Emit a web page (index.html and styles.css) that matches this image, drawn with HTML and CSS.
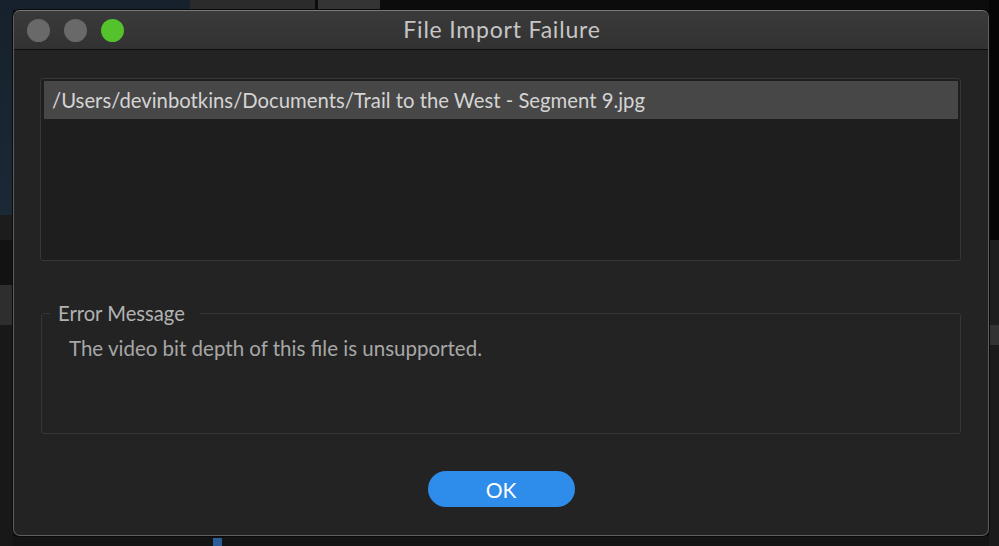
FILE: index.html
```html
<!DOCTYPE html>
<html>
<head>
<meta charset="utf-8">
<link rel="stylesheet" href="styles.css">
</head>
<body>
<div class="desktop">
  <div class="dialog">
    <div class="titlebar">
      <div class="lights">
        <span class="light"></span>
        <span class="light"></span>
        <span class="light green"></span>
      </div>
      <div class="title">File Import Failure</div>
    </div>
    <div class="content">
      <div class="filelist">
        <div class="row selected">/Users/devinbotkins/Documents/Trail to the West - Segment 9.jpg</div>
      </div>
      <fieldset class="group">
        <legend>Error Message</legend>
        <p class="message">The video bit depth of this file is unsupported.</p>
      </fieldset>
      <div class="actions">
        <button class="ok">OK</button>
      </div>
    </div>
  </div>
</div>
</body>
</html>
```
FILE: styles.css
```css
* { box-sizing: border-box; }
html, body { margin: 0; padding: 0; }
body {
  width: 999px;
  height: 546px;
  overflow: hidden;
  background: #0c0c0c;
  font-family: Lato, "Open Sans", sans-serif;
}
.desktop {
  width: 999px;
  height: 546px;
  padding: 10px 10px 10px 13px;
  background:
    linear-gradient(#16212d, #16212d) 0 0 / 190px 10px no-repeat,
    linear-gradient(#2b2b2b, #2b2b2b) 190px 0 / 125px 10px no-repeat,
    linear-gradient(#343434, #343434) 318px 0 / 62px 10px no-repeat,
    linear-gradient(#16212d, #1b2835) 0 0 / 13px 215px no-repeat,
    linear-gradient(#1c1c1c, #1c1c1c) 0 215px / 13px 25px no-repeat,
    linear-gradient(#121212, #121212) 0 240px / 13px 45px no-repeat,
    linear-gradient(#2e2e2e, #2e2e2e) 0 285px / 13px 40px no-repeat,
    linear-gradient(#181818, #181818) 0 325px / 13px 221px no-repeat,
    linear-gradient(#050505, #050505) 989px 0 / 10px 240px no-repeat,
    linear-gradient(#1e1e1e, #1e1e1e) 989px 240px / 10px 85px no-repeat,
    linear-gradient(#333, #333) 989px 325px / 10px 20px no-repeat,
    linear-gradient(#1b1b1b, #1b1b1b) 989px 345px / 10px 201px no-repeat,
    linear-gradient(#2a5d98, #2a5d98) 213px 538px / 9px 8px no-repeat,
    linear-gradient(#141414, #141414) 0 536px / 999px 10px no-repeat,
    #0c0c0c;
}
.dialog {
  width: 976px;
  height: 526px;
  border: 1px solid #5e5e5e;
  border-top-color: #7a7a7a;
  border-radius: 7px;
  background: #232323;
  overflow: hidden;
  display: flex;
  flex-direction: column;
  box-shadow: 0 0 0 1px #0a0a0a;
}
.titlebar {
  height: 39px;
  flex: none;
  background: linear-gradient(#3a3a3a, #323232);
  border-bottom: 1px solid #0e0e0e;
  display: flex;
  align-items: center;
  position: relative;
}
.lights {
  display: flex;
  gap: 14px;
  padding-left: 13px;
}
.light {
  width: 23px;
  height: 23px;
  border-radius: 50%;
  background: #696969;
}
.light.green { background: #53c22d; }
.title {
  position: absolute;
  left: 0;
  right: 0;
  top: 0;
  bottom: 2px;
  display: flex;
  align-items: center;
  justify-content: center;
  color: #c6c6c6;
  font-size: 23px;
  letter-spacing: 0.8px;
  padding-left: 2px;
  pointer-events: none;
}
.content {
  flex: 1;
  display: flex;
  flex-direction: column;
  padding: 28px 27px 0 26px;
}
.filelist {
  height: 183px;
  background: #1e1e1e;
  border: 1px solid #363636;
  border-radius: 3px;
  padding: 2px 2px 0 3px;
}
.row {
  height: 38px;
  line-height: 38px;
  padding-left: 8px;
  font-size: 20.3px;
  color: #d4d4d4;
  white-space: nowrap;
}
.row.selected { background: #474747; }
.group {
  margin: 40px 0 0 1px;
  height: 133px;
  border: 1px solid #363636;
  border-radius: 3px;
  padding: 0;
}
.group legend {
  margin-left: 8px;
  padding: 0 15px 0 8px;
  font-size: 20.2px;
  color: #b2b2b2;
}
.message {
  margin: 11px 0 0 27px;
  font-size: 20.5px;
  color: #a7a7a7;
}
.actions {
  display: flex;
  justify-content: center;
  margin-top: 37px;
  padding-left: 1px;
}
.ok {
  width: 147px;
  height: 36px;
  border: none;
  border-radius: 18px;
  background: #2e8ceb;
  color: #ffffff;
  font-family: Lato, "Open Sans", sans-serif;
  font-size: 21px;
  padding: 0;
}
```
